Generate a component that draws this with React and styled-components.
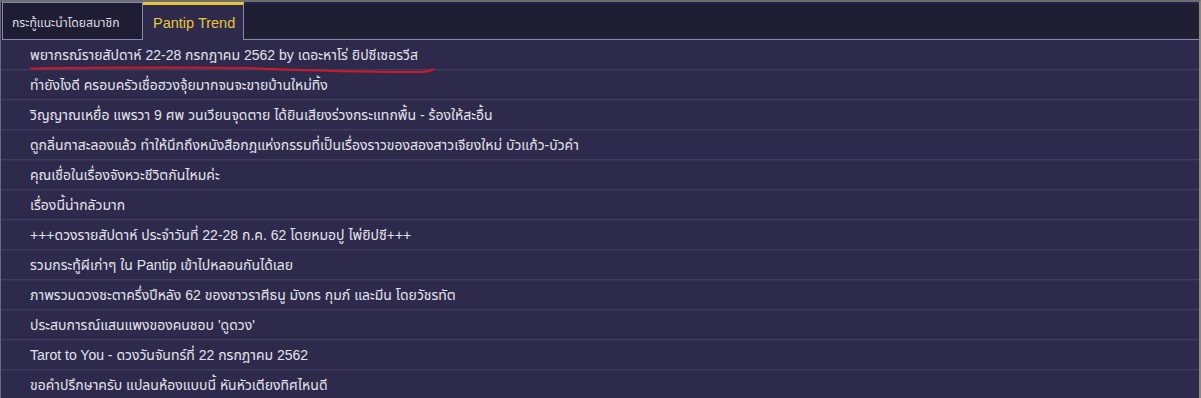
import React from 'react'
import styled, { createGlobalStyle } from 'styled-components';

const GlobalStyle = createGlobalStyle`
    html, body {
        margin: 0;
        padding: 0;
        background: #2d2a4b;
    }
    body {
        font-family: "Liberation Sans", "Noto Sans Thai UI", "Noto Sans Thai", sans-serif;
    }
`;

const topics = [
    'พยากรณ์รายสัปดาห์ 22-28 กรกฎาคม 2562 by เดอะหาโร่ ยิปซีเซอรวีส',
    'ทำยังไงดี ครอบครัวเชื่อฮวงจุ้ยมากจนจะขายบ้านใหม่ทิ้ง',
    'วิญญาณเหยื่อ แพรวา 9 ศพ วนเวียนจุดตาย ได้ยินเสียงร่วงกระแทกพื้น - ร้องให้สะอื้น',
    'ดูกลิ่นกาสะลองแล้ว ทำให้นึกถึงหนังสือกฎแห่งกรรมที่เป็นเรื่องราวของสองสาวเจียงใหม่ บัวแก้ว-บัวคำ',
    'คุณเชื่อในเรื่องจังหวะชีวิตกันไหมค่ะ',
    'เรื่องนี้น่ากลัวมาก',
    '+++ดวงรายสัปดาห์ ประจำวันที่ 22-28 ก.ค. 62 โดยหมอปู ไพ่ยิปซี+++',
    'รวมกระทู้ผีเก่าๆ ใน Pantip เข้าไปหลอนกันได้เลย',
    'ภาพรวมดวงชะตาครึ่งปีหลัง 62 ของชาวราศีธนู มังกร กุมภ์ และมีน โดยวัชรทัต',
    "ประสบการณ์แสนแพงของคนชอบ 'ดูดวง'",
    'Tarot to You - ดวงวันจันทร์ที่ 22 กรกฎาคม 2562',
    'ขอคำปรึกษาครับ แปลนห้องแบบนี้ หันหัวเตียงทิศไหนดี',
]

const App = () => {
    return (
        <>
            <GlobalStyle />
            <Frame>
                <TabBar>
                    <Tab>กระทู้แนะนำโดยสมาชิก</Tab>
                    <Tab active>Pantip Trend</Tab>
                    <TabFiller />
                </TabBar>

                <TopicList>
                    {topics.map((t, i) => (
                        <TopicRow key={i}>
                            <TopicLink>{t}</TopicLink>
                            {/* red hand drawn mark under the first topic */}
                            {i === 0 && (
                                <Scribble width="420" height="12" viewBox="0 0 420 12">
                                    <path
                                        d="M2 3.5 Q120 2 220 3 Q330 7.5 392 7 Q400 6.5 404 4.5"
                                        fill="none"
                                        stroke="#d3182a"
                                        strokeWidth="2"
                                        strokeLinecap="round"
                                    />
                                </Scribble>
                            )}
                        </TopicRow>
                    ))}
                </TopicList>
            </Frame>
        </>
    )
}

export default App

const Frame = styled.div`
    width: 1201px;
    height: 398px;
    box-sizing: border-box;
    border-top: 2px solid #6e6d72;
    border-left: 1px solid #6a6982;
    border-right: 2px solid #8c877b;
    background: #2d2a4b;
    overflow: hidden;
`;

const TabBar = styled.div`
    display: flex;
    align-items: stretch;
    height: 38px;
    box-sizing: border-box;
    padding-left: 1px;
    background: #1f1e33;
`;

const Tab = styled.div`
    display: flex;
    align-items: center;
    box-sizing: border-box;
    padding: ${p => p.active ? '1px 10px 0' : '2px 9px 0'};
    font-size: ${p => p.active ? '14.5px' : '12.2px'};
    color: ${p => p.active ? '#e9c63c' : '#dcdce4'};
    background: ${p => p.active ? '#2d2a4b' : '#1e1d33'};
    border: 1px solid #8a88ac;
    border-top: ${p => p.active ? '3px solid #e6c43a' : '1px solid #8a88ac'};
    border-left: ${p => p.active ? 'none' : '1px solid #8a88ac'};
    border-bottom: ${p => p.active ? 'none' : '1px solid #8a88ac'};
    width: ${p => p.active ? '101px' : '141px'};
    white-space: nowrap;
`;

const TabFiller = styled.div`
    flex: 1;
    box-sizing: border-box;
    border-top: 2px solid #24224a;
    border-bottom: 1px solid #8a88ac;
    box-shadow: inset 0 -4px 0 -2px #2a1f30;
`;

const TopicList = styled.div`
    display: flex;
    flex-direction: column;
`;

const TopicRow = styled.div`
    position: relative;
    display: flex;
    align-items: center;
    height: 30px;
    box-sizing: border-box;
    padding-left: 29px;
    border-bottom: 1px solid #403d62;
    box-shadow: 0 2px 0 -1px #35324f;
`;

const TopicLink = styled.span`
    font-size: 14px;
    color: #e4e3ec;
    cursor: pointer;
    white-space: nowrap;
`;

const Scribble = styled.svg`
    position: absolute;
    left: 28px;
    top: 25px;
    pointer-events: none;
`;
